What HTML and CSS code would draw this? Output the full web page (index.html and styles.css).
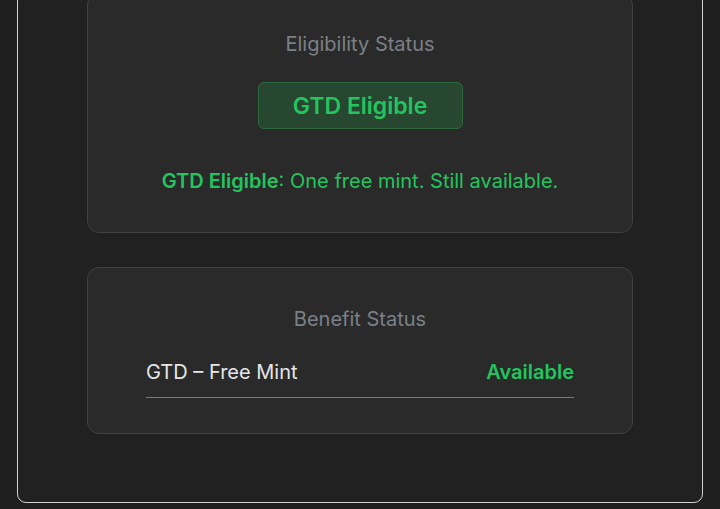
FILE: index.html
```html
<!DOCTYPE html>
<html lang="en">
  <head>
    <meta charset="UTF-8" />
    <meta name="viewport" content="width=device-width, initial-scale=1.0" />
    <title>Mint Status</title>
    <link rel="stylesheet" href="styles.css">
  </head>
  <body>
    <div class="panel">
      <div class="card">
        <h3 class="card-title">Eligibility Status</h3>
        <div class="badge">GTD Eligible</div>
        <p class="note"><strong>GTD Eligible</strong>: One free mint. Still available.</p>
      </div>

      <div class="card">
        <h3 class="card-title">Benefit Status</h3>
        <div class="benefit-row">
          <span class="benefit-name">GTD – Free Mint</span>
          <span class="benefit-state">Available</span>
        </div>
      </div>
    </div>
  </body>
</html>
```

FILE: styles.css
```css
body {
  margin: 0;
  background-color: #1f1f1f;
  font-family: Inter, "Noto Sans", sans-serif;
}

.panel {
  margin: -8px 17px 6px 17px;
  padding: 0 69px 68px 69px;
  border: 1px solid #d2d2d2;
  border-radius: 9px;
  background-color: #212121;
  display: flex;
  flex-direction: column;
  gap: 34px;
}

.card {
  padding: 36px 58px 37px 58px;
  border: 1px solid #414141;
  border-radius: 12px;
  background-color: #2a2a2a;
  display: flex;
  flex-direction: column;
  align-items: center;
}

.card + .card {
  padding-top: 37px;
  padding-bottom: 35px;
}

.card-title {
  margin: 0 0 24px 0;
  font-size: 20px;
  font-weight: 400;
  line-height: 28px;
  color: #7b8088;
}

.badge {
  width: 203px;
  height: 45px;
  display: flex;
  align-items: center;
  justify-content: center;
  border: 1px solid #2d6a3e;
  border-radius: 6px;
  background-color: #274731;
  color: #22c55e;
  font-size: 23px;
  font-weight: 600;
}

.note {
  margin: 38px 0 0 0;
  font-size: 20px;
  line-height: 28px;
  color: #22c55e;
}

.note strong {
  font-weight: 600;
}

.benefit-row {
  align-self: stretch;
  display: flex;
  justify-content: space-between;
  align-items: center;
  margin-top: 1px;
  padding-bottom: 11px;
  border-bottom: 1px solid #7a7a7a;
  font-size: 20px;
  line-height: 28px;
}

.benefit-name {
  color: #e6e6e6;
}

.benefit-state {
  color: #22c55e;
  font-weight: 600;
}
```
